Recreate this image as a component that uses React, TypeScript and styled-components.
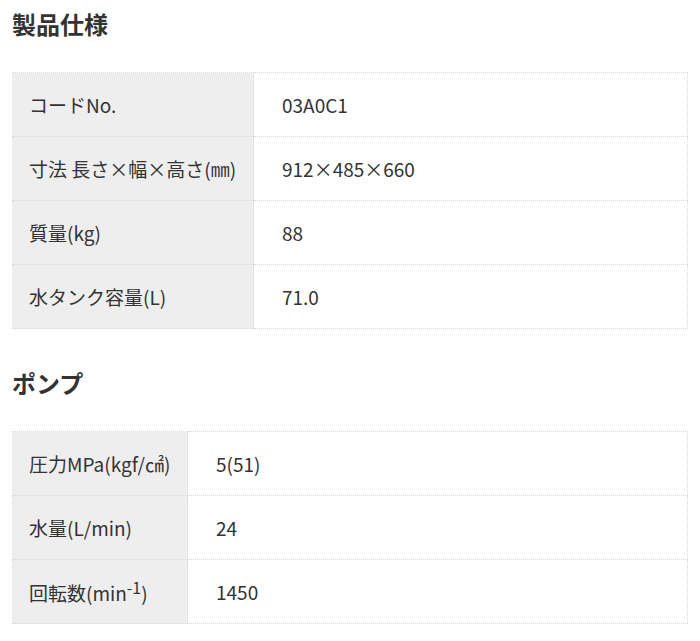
import React from "react";
import styled, { createGlobalStyle } from "styled-components";

const Global = createGlobalStyle`
  html, body { margin: 0; padding: 0; background: #fff; }
  body { font-family: "Noto Sans CJK JP", "Noto Sans", sans-serif; color: #333; }
`;

const Page = styled.div`
  padding: 7px 12px 0 12px;
  width: 676px;
`;

const Heading = styled.h2`
  margin: 0;
  font-size: 24px;
  font-weight: 700;
  line-height: 34px;
  color: #333;
`;

const Section = styled.section`
  margin-bottom: 37px;
  display: flex;
  flex-direction: column;
  gap: 31px;
`;

const Table = styled.table`
  width: 100%;
  border-collapse: collapse;
  font-size: 19px;
`;

const Row = styled.tr``;

const Label = styled.th<{ $w: number }>`
  width: ${(p) => p.$w}px;
  box-sizing: border-box;
  background: #eeeeee;
  border: 1px dotted #dadada;
  text-align: left;
  font-weight: 400;
  padding: 0 16px;
  height: 63px;
  color: #333;
`;

const Value = styled.td<{ $pad: number }>`
  border: 1px dotted #dadada;
  padding: 0 ${(p) => p.$pad}px;
  height: 63px;
  color: #333;
`;

type Item = [React.ReactNode, string];

const Spec = ({ items, w, pad }: { items: Item[]; w: number; pad: number }) => (
  <Table>
    <tbody>
      {items.map(([l, v], i) => (
        <Row key={i}>
          <Label $w={w}>{l}</Label>
          <Value $pad={pad}>{v}</Value>
        </Row>
      ))}
    </tbody>
  </Table>
);

export default function App() {
  return (
    <Page>
      <Global />
      <Section>
        <Heading>製品仕様</Heading>
        <Spec
          w={241}
          pad={28}
          items={[
            ["コードNo.", "03A0C1"],
            ["寸法 長さ×幅×高さ(㎜)", "912×485×660"],
            ["質量(kg)", "88"],
            ["水タンク容量(L)", "71.0"],
          ]}
        />
      </Section>
      <Section>
        <Heading>ポンプ</Heading>
        <Spec
          w={175}
          pad={28}
          items={[
            ["圧力MPa(kgf/㎠)", "5(51)"],
            ["水量(L/min)", "24"],
            [<>回転数(min<sup>-1</sup>)</>, "1450"],
          ]}
        />
      </Section>
    </Page>
  );
}
